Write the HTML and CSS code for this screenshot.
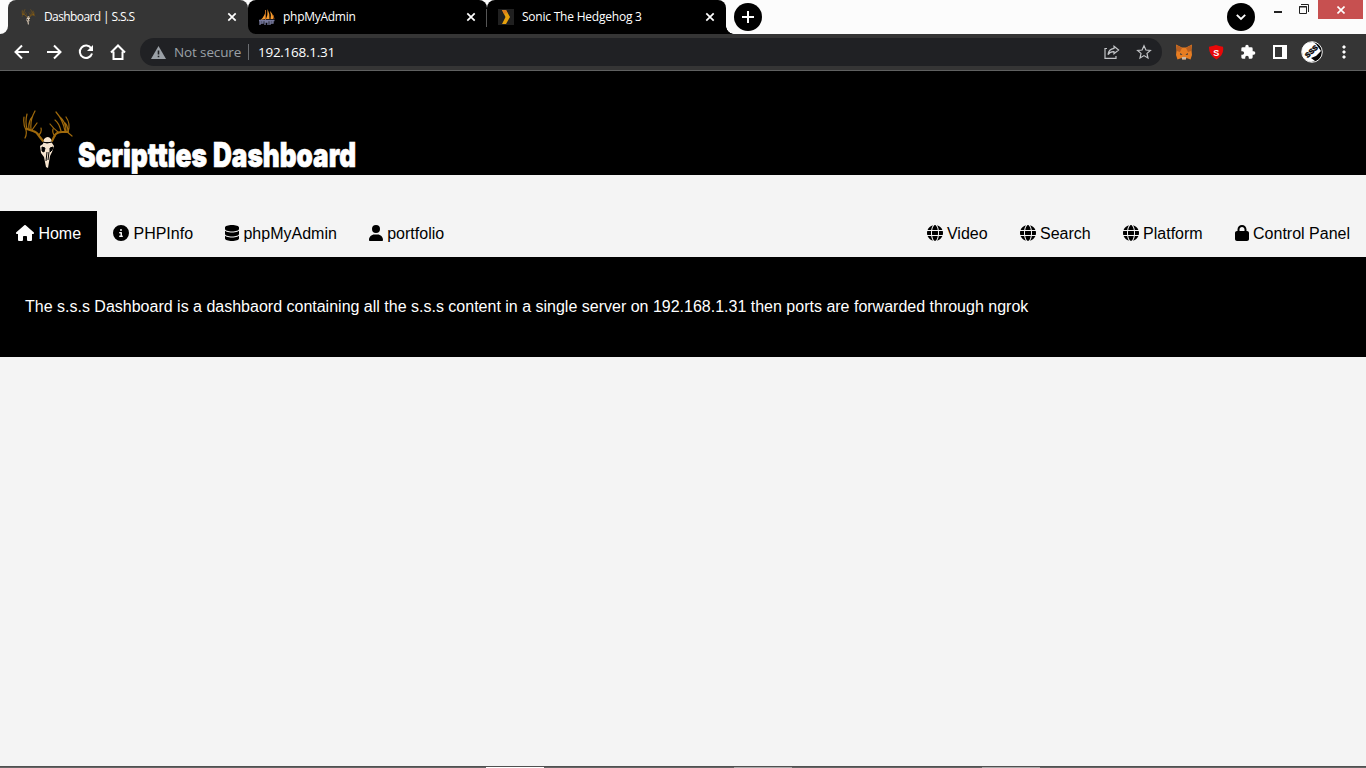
FILE: index.html
```html
<!DOCTYPE html>
<html lang="en">
<head>
<meta charset="utf-8">
<title>Dashboard | S.S.S</title>
<link rel="stylesheet" href="styles.css">
</head>
<body>
<svg class="defs" width="0" height="0">
  <symbol id="close" viewBox="0 0 10 10"><path d="M1.3 1.3l7.4 7.4M8.7 1.3L1.3 8.7" fill="none" stroke="currentColor" stroke-width="1.7"/></symbol>
  <symbol id="deer" viewBox="0 0 50 59">
    <g fill="none" stroke="#a06a0c" stroke-width="1.2" stroke-linecap="round" stroke-linejoin="round">
      <path d="M20 31L16 26Q14 22 10 21L4 19" stroke-width="2.2"/>
      <path d="M3 20Q0 15 1 7M4 19Q2 12 4 4M6 19Q5 12 9 7M8 19Q7 10 12 1M9 20L14 13M3 20Q4 24 2 28M16 25Q19 22 18 18"/>
      <path d="M29 31L32 25Q34 22 39 22L45 22" stroke-width="2.2"/>
      <path d="M45 22Q48 14 43 7M45 22Q45 16 42 13M43 21Q43 12 37 7M42 21Q40 10 33 2M38 21Q36 13 32 10M35 22Q30 18 27 14M32 26Q29 23 30 19M43 21L49 26"/>
    </g>
    <path d="M21 29Q25 25 28 29L29 33L31 36L29 42L27 46L25 58L23 57L21 47L18 43L17 36L20 34Z" fill="#f7e5cf"/>
    <path d="M20 32L24 33L29 32M19 37L22 38L21 42L19 41ZM30 37L27 38L27 42L29 40ZM24 42L23 51M26 42L25 50" fill="#000" stroke="#000" stroke-width="1"/>
  </symbol>
  <symbol id="globe" viewBox="0 0 512 512"><path fill="currentColor" d="M352 256c0 22.2-1.2 43.6-3.3 64H163.3c-2.2-20.4-3.3-41.8-3.3-64s1.2-43.6 3.3-64H348.7c2.2 20.4 3.3 41.8 3.3 64zm28.8-64H503.9c5.3 20.5 8.1 41.9 8.1 64s-2.8 43.5-8.1 64H380.8c2.1-20.6 3.2-42 3.2-64s-1.1-43.4-3.2-64zm112.6-32H376.7c-10-63.9-29.8-117.4-55.3-151.6c78.3 20.7 142 77.5 171.9 151.6zm-149.1 0H167.7c6.1-36.4 15.5-68.6 27-94.7c10.5-23.6 22.2-40.7 33.5-51.5C239.4 3.2 248.7 0 256 0s16.6 3.2 27.8 13.8c11.3 10.8 23 27.9 33.5 51.5c11.6 26 20.9 58.2 27 94.7zm-209 0H18.6C48.6 85.9 112.2 29.1 190.6 8.4C165.1 42.6 145.3 96.1 135.3 160zM8.1 192H131.2c-2.1 20.6-3.2 42-3.2 64s1.1 43.4 3.2 64H8.1C2.8 299.5 0 278.1 0 256s2.8-43.5 8.1-64zM194.7 446.6c-11.6-26-20.9-58.2-27-94.6H344.3c-6.1 36.4-15.5 68.6-27 94.6c-10.5 23.6-22.2 40.7-33.5 51.5C272.6 508.8 263.3 512 256 512s-16.6-3.2-27.8-13.8c-11.3-10.8-23-27.9-33.5-51.5zM135.3 352c10 63.9 29.8 117.4 55.3 151.6C112.2 482.9 48.6 426.1 18.6 352H135.3zm358.1 0c-30 74.1-93.6 130.9-171.9 151.6c25.5-34.2 45.2-87.7 55.3-151.6H493.4z"/></symbol>
</svg>

<div class="strip">
  <div class="strip-gap"><i></i></div>
  <div class="tab tab-active">
    <svg class="fav fav-deer"><use href="#deer"/></svg>
    <span class="t1">Dashboard | S.S.S</span>
    <svg class="x"><use href="#close"/></svg>
  </div>
  <div class="tab-wrap">
    <div class="tab tab-second">
      <svg class="fav" viewBox="0 0 16 16"><path d="M6 1Q7 6 1.500 11L6 10ZM8.500 0Q11 5 10.500 10L7 10Q9 6 8.500 0ZM11 2Q15 6 14 10H11.500Q12.500 6 11 2Z" fill="#f89c2e"/><path d="M6.500 1V11M14 6L15 10" stroke="#b8651c" fill="none"/><path d="M1 16V12H4V14H1M6 16V11M6 13H9M9 11V16M11 16V12H14V14H11M0 11.500H15.500" stroke="#777a9e" stroke-width="1.300" fill="none"/></svg>
      <span class="t2">phpMyAdmin</span>
      <svg class="x"><use href="#close"/></svg>
    </div>
  </div>
  <div class="tab tab-third">
    <svg class="fav" viewBox="0 0 16 16"><path fill="#202020" d="M0 0h16v16H0z"/><path d="M4 1H8L12 8L8 15H4L7.500 8Z" fill="#e5a00d"/><path d="M4 1H8L9.500 4L6 5Z" fill="#dd7d1c"/></svg>
    <span class="t3">Sonic The Hedgehog 3</span>
    <svg class="x"><use href="#close"/></svg>
  </div>
  <div class="round new-tab"><svg viewBox="0 0 28 28"><path d="M14 8v12M8 14h12" stroke="#fff" stroke-width="2"/></svg></div>
  <div class="round tab-search"><svg viewBox="0 0 28 28"><path d="M9.800 11.800L14 16l4.200-4.200" stroke="#fff" stroke-width="1.800" fill="none"/></svg></div>
  <div class="win">
    <svg class="min" viewBox="0 0 8 2"><path d="M0 0h8v2H0z" fill="#222"/></svg>
    <svg class="restore" viewBox="0 0 10 10"><path d="M.5 2.500h7v7h-7zM0 3h8M2 .500h7.500V8" fill="none" stroke="#222" stroke-width="1"/></svg>
    <div class="win-close"><svg viewBox="0 0 8 8"><path d="M.5.500l7 7M7.500.500l-7 7" stroke="#fff" stroke-width="1.600"/></svg></div>
  </div>
</div>

<div class="toolbar">
  <svg class="tool" viewBox="0 0 16 16"><path d="M15 8H2M8 1.500L1.500 8L8 14.500"/></svg>
  <svg class="tool" viewBox="0 0 16 16"><path d="M1 8H14M8 1.500L14.500 8L8 14.500"/></svg>
  <svg class="tool" viewBox="0 0 16 16"><path d="M13.300 4.500A6.200 6.200 0 1 0 14 9.500"/><path d="M15 1V7H9Z" fill="#fff" stroke="none"/></svg>
  <svg class="tool" viewBox="0 0 16 16"><path d="M1 8.500L8 1.500L15 8.500M3.500 7.500V15H12.500V7.500"/></svg>
  <div class="omnibox">
    <svg class="warn" viewBox="0 0 15 13"><path d="M7.500 0L15 13H0Z" fill="#9aa0a6"/><path d="M7.500 4.500V8.500M7.500 9.700V11.300" stroke="#202124" stroke-width="1.600"/></svg>
    <span class="insecure">Not secure</span>
    <i class="bar"></i>
    <span class="url">192.168.1.31</span>
    <svg class="share" viewBox="0 0 16 14"><path d="M3 3.500H1V13.400H12V11M10 1.300L14.600 5L10 8.700V6.700Q6 6.500 4 9.600Q4.700 4.200 10 3.400Z"/></svg>
    <svg class="star" viewBox="0 0 16 16"><path d="M8 1.800L9.900 6L14.400 6.400L11 9.400L12 14L8 11.600L4 14L5 9.400L1.600 6.400L6.100 6Z"/></svg>
  </div>
  <svg class="ext fox" viewBox="0 0 16 16"><path d="M0 .500L6 3.500H10L16 .500L15.500 6L16 11L14.500 15.500L10.500 14L9.500 15.500H6.500L5.500 14L1.500 15.500L0 11L.500 6Z" fill="#e77d22"/><path d="M.5 1L6 4L4 8L1 7ZM15.500 1L10 4L12 8L15 7Z" fill="#b95f20"/><path d="M6 13H10V15.500H6Z" fill="#c8b7a7"/><path d="M4 9L6.500 10.500L4.500 11ZM12 9L9.500 10.500L11.500 11Z" fill="#263445"/></svg>
  <svg class="ext shield" viewBox="0 0 16 16"><path d="M8 1Q11 2.300 15 2.800Q16.500 11 8.500 15.500Q.5 11 1 2.800Q5 2.300 8 1Z" fill="#e80808"/><text x="8.300" y="11.500" text-anchor="middle">S</text></svg>
  <svg class="ext" viewBox="0 0 24 24"><path d="M20.500 11H19V7a2 2 0 0 0-2-2h-4V3.500a2.500 2.500 0 0 0-5 0V5H4a2 2 0 0 0-2 2v3.800h1.500a2.700 2.700 0 0 1 0 5.400H2V20a2 2 0 0 0 2 2h3.800v-1.500a2.700 2.700 0 0 1 5.400 0V22H17a2 2 0 0 0 2-2v-4h1.500a2.500 2.500 0 0 0 0-5z" fill="#fff"/></svg>
  <svg class="ext panel" viewBox="0 0 14 14"><path d="M0 0H14V14H0ZM2 2V12H9V2Z" fill="#fff" fill-rule="evenodd"/></svg>
  <svg class="avatar" viewBox="0 0 22 22"><circle cx="11" cy="11" r="10.300" fill="#050505" stroke="#eee"/><path d="M1 11Q1 1 12 1L15 3L20 10L15 15L10 17L14 20L10 21Q1 19 1 11Z" fill="#fff"/><text x="11" y="12.500" text-anchor="middle" textLength="15" lengthAdjust="spacingAndGlyphs" transform="rotate(-42 11 11)">SSS</text></svg>
  <svg class="dots" viewBox="0 0 4 14"><path d="M.5 1h3v2h-3zM1 .500h2v3H1zM.5 6h3v2h-3zM1 5.500h2v3H1zM.5 11h3v2h-3zM1 10.500h2v3H1z" fill="#fff"/></svg>
</div>

<header>
  <svg class="logo"><use href="#deer"/></svg>
  <h1><svg class="title" viewBox="0 0 282 40"><text x="1" y="32" textLength="129" lengthAdjust="spacingAndGlyphs">Scriptties</text><text x="136" y="32" textLength="143" lengthAdjust="spacingAndGlyphs">Dashboard</text></svg></h1>
</header>

<nav>
  <a class="current"><svg class="w18" viewBox="0 0 576 512"><path d="M575.8 255.500c0 18-15 32.100-32 32.100h-32l.7 160.200c0 2.700-.2 5.400-.5 8.100V472c0 22.100-17.900 40-40 40H392c-22.100 0-40-17.900-40-40V384c0-17.700-14.300-32-32-32H256c-17.700 0-32 14.300-32 32v88c0 22.100-17.900 40-40 40H104c-22.100 0-40-17.900-40-40V287.600H32c-18 0-32-14-32-32.100c0-9 3-17 10-24L266.400 8c7-7 15-8 22-8s15 2 21 7L564.800 231.500c8 7 12 15 11 24z"/></svg>Home</a>
  <a><svg class="w16" viewBox="0 0 512 512"><path d="M256 512A256 256 0 1 0 256 0a256 256 0 1 0 0 512zM216 336h24V272H216c-13.300 0-24-10.700-24-24s10.700-24 24-24h48c13.300 0 24 10.700 24 24v88h8c13.300 0 24 10.700 24 24s-10.700 24-24 24H216c-13.300 0-24-10.700-24-24s10.700-24 24-24zm40-208a32 32 0 1 1 0 64 32 32 0 1 1 0-64z"/></svg>PHPInfo</a>
  <a><svg class="w14" viewBox="0 0 448 512"><path d="M448 80v48c0 44.200-100.300 80-224 80S0 172.200 0 128V80C0 35.800 100.300 0 224 0S448 35.800 448 80zM393.200 214.700c20.800-7.400 39.900-16.900 54.800-28.600V288c0 44.200-100.300 80-224 80S0 332.200 0 288V186.100c14.900 11.800 34 21.200 54.800 28.600C99.700 230.700 159.500 240 224 240s124.300-9.300 169.200-25.300zM0 346.100c14.900 11.800 34 21.200 54.800 28.600C99.700 390.700 159.500 400 224 400s124.300-9.300 169.200-25.300c20.800-7.400 39.900-16.900 54.800-28.600V432c0 44.200-100.300 80-224 80S0 476.200 0 432V346.100z"/></svg>phpMyAdmin</a>
  <a><svg class="w14" viewBox="0 0 448 512"><path d="M224 256A128 128 0 1 0 224 0a128 128 0 1 0 0 256zm50.700 48H173.300C77.600 304 0 381.600 0 477.300c0 19.100 15.500 34.700 34.700 34.700H413.300c19.200 0 34.700-15.500 34.700-34.700C448 381.600 370.400 304 274.700 304z"/></svg>portfolio</a>
  <div class="right">
    <a><svg class="w16"><use href="#globe"/></svg>Video</a>
    <a><svg class="w16"><use href="#globe"/></svg>Search</a>
    <a><svg class="w16"><use href="#globe"/></svg>Platform</a>
    <a><svg class="w14" viewBox="0 0 448 512"><path d="M144 144v48H304V144c0-44.200-35.800-80-80-80s-80 35.800-80 80zM80 192V144C80 64.500 144.500 0 224 0s144 64.500 144 144v48h16c35.300 0 64 28.700 64 64V448c0 35.300-28.700 64-64 64H64c-35.300 0-64-28.700-64-64V256c0-35.300 28.700-64 64-64H80z"/></svg>Control Panel</a>
  </div>
</nav>

<main><p>The s.s.s Dashboard is a dashbaord containing all the s.s.s content in a single server on 192.168.1.31 then ports are forwarded through ngrok</p></main>
<footer><i class="task task-a"></i><i class="task task-b"></i><i class="task task-c"></i></footer>
</body>
</html>
```
FILE: styles.css
```css
* { box-sizing: border-box; }
body { margin: 0; width: 1366px; height: 768px; overflow: hidden; background: #f4f4f4; font: 16px "Liberation Sans", Arial, sans-serif; display: flex; flex-direction: column; }
svg { display: block; flex: none; }
.defs { position: absolute; }
.strip { height: 34px; flex: none; display: flex; background: #fcfcfc; font: 12px/34px "Open Sans", "Noto Sans", sans-serif; color: #fff; }
.strip-gap { width: 8px; background: #353535; }
.strip-gap i { display: block; height: 34px; background: #fcfcfc; border-bottom-right-radius: 8px; }
.tab { width: 239px; height: 34px; display: flex; align-items: center; padding: 0 11px; border-radius: 8px 8px 0 0; background: #000; white-space: nowrap; }
.tab-active { width: 240px; background: #353535; padding: 0 11px 0 12px; }
.tab-wrap { background: linear-gradient(90deg, #353535 8px, #000 8px) 0 100% / 100% 10px no-repeat; }
.tab-second { border-radius: 8px 8px 0 8px; }
.tab-third { position: relative; }
.tab-third::before { content: ""; position: absolute; left: -1px; top: 9px; width: 1px; height: 18px; background: #555; }
.tab-third::after { content: ""; position: absolute; left: 239px; bottom: 0; width: 8px; height: 8px; background: radial-gradient(circle at 8px 0, transparent 7.5px, #000 8px); }
.fav { width: 16px; height: 16px; margin-right: 8px; }
.fav-deer { width: 17px; margin-right: 7px; }
.x { width: 10px; height: 10px; margin-left: auto; }
.t1 { letter-spacing: -.6px; }
.t2 { letter-spacing: -.28px; }
.t3 { letter-spacing: -.22px; }
.round { width: 28px; height: 28px; border-radius: 50%; background: #000; margin: 3px 0 0 8px; }
.tab-search { margin-left: auto; }
.win { display: flex; width: 111px; padding-left: 19px; }
.min { width: 8px; height: 2px; margin-top: 11px; }
.restore { width: 10px; height: 10px; margin: 4px 9px 0 17px; }
.win-close { width: 45px; height: 19px; background: #c75050; display: flex; align-items: center; justify-content: center; }
.win-close svg { width: 8px; height: 8px; }
.toolbar { height: 37px; flex: none; display: flex; align-items: center; background: #353535; border-bottom: 1px solid #5f6060; padding-left: 14px; }
.tool { width: 16px; height: 16px; margin-right: 16px; fill: none; stroke: #fff; stroke-width: 2; }
.toolbar > .tool:nth-child(4) { margin-right: 14px; }
.omnibox { width: 1022px; height: 28px; border-radius: 14px; background: #202124; display: flex; align-items: center; padding: 0 10px 0 11px; font: 13.5px/28px "Open Sans", "Noto Sans", sans-serif; white-space: nowrap; }
.warn { width: 15px; height: 13px; margin-right: 8px; }
.insecure { width: 67px; color: #9aa0a6; letter-spacing: -.13px; }
.bar { width: 1px; height: 16px; background: #6b6e72; margin: 0 9px 0 7px; }
.url { color: #fff; letter-spacing: -.27px; }
.share { width: 16px; height: 14px; margin-left: auto; }
.star { width: 16px; height: 16px; margin-left: 16px; }
.share, .star { fill: none; stroke: #c2c4c7; stroke-width: 1.2; }
.ext { width: 16px; height: 16px; margin-left: 16px; }
.fox { margin-left: 14px; }
.shield text { font: bold 9px "Liberation Sans", sans-serif; fill: #fff; }
.panel { width: 14px; height: 14px; margin-left: 17px; }
.avatar { width: 22px; height: 22px; margin-left: 14px; }
.avatar text { font: bold 7px "Liberation Sans", sans-serif; fill: #000; stroke: #000; stroke-width: .4px; }
.dots { width: 4px; height: 14px; margin-left: 19px; }
header { height: 104px; flex: none; background: #000; display: flex; align-items: flex-start; padding: 39px 0 0 23px; }
.logo { width: 50px; height: 59px; margin-right: 4px; }
h1 { margin: 25px 0 0; }
.title { width: 282px; height: 40px; overflow: visible; }
.title text { font: 900 33.5px "Inter", "Roboto", sans-serif; fill: #fff; stroke: #fff; stroke-width: .7px; }
nav { height: 46px; flex: none; margin-top: 36px; display: flex; }
nav a { height: 46px; padding: 0 16px; display: flex; align-items: center; line-height: 46px; color: #000; white-space: nowrap; }
nav a svg { height: 16px; margin: -2px 4.4px 0 0; fill: currentColor; }
nav .current { background: #000; color: #fff; }
.w18 { width: 18px; }
.w16 { width: 16px; }
.w14 { width: 14px; }
.right { margin-left: auto; display: flex; }
main { height: 100px; flex: none; background: #000; color: #fff; padding: 40px 25px; }
p { margin: 0; line-height: 20px; white-space: nowrap; }
footer { height: 2px; flex: none; margin-top: auto; background: #666; border-top: 1px solid #505050; display: flex; }
.task { width: 58px; height: 1px; background: #aaa; }
.task-a { margin-left: 486px; background: #fff; }
.task-b { margin-left: 190px; }
.task-c { margin-left: 190px; }
```
